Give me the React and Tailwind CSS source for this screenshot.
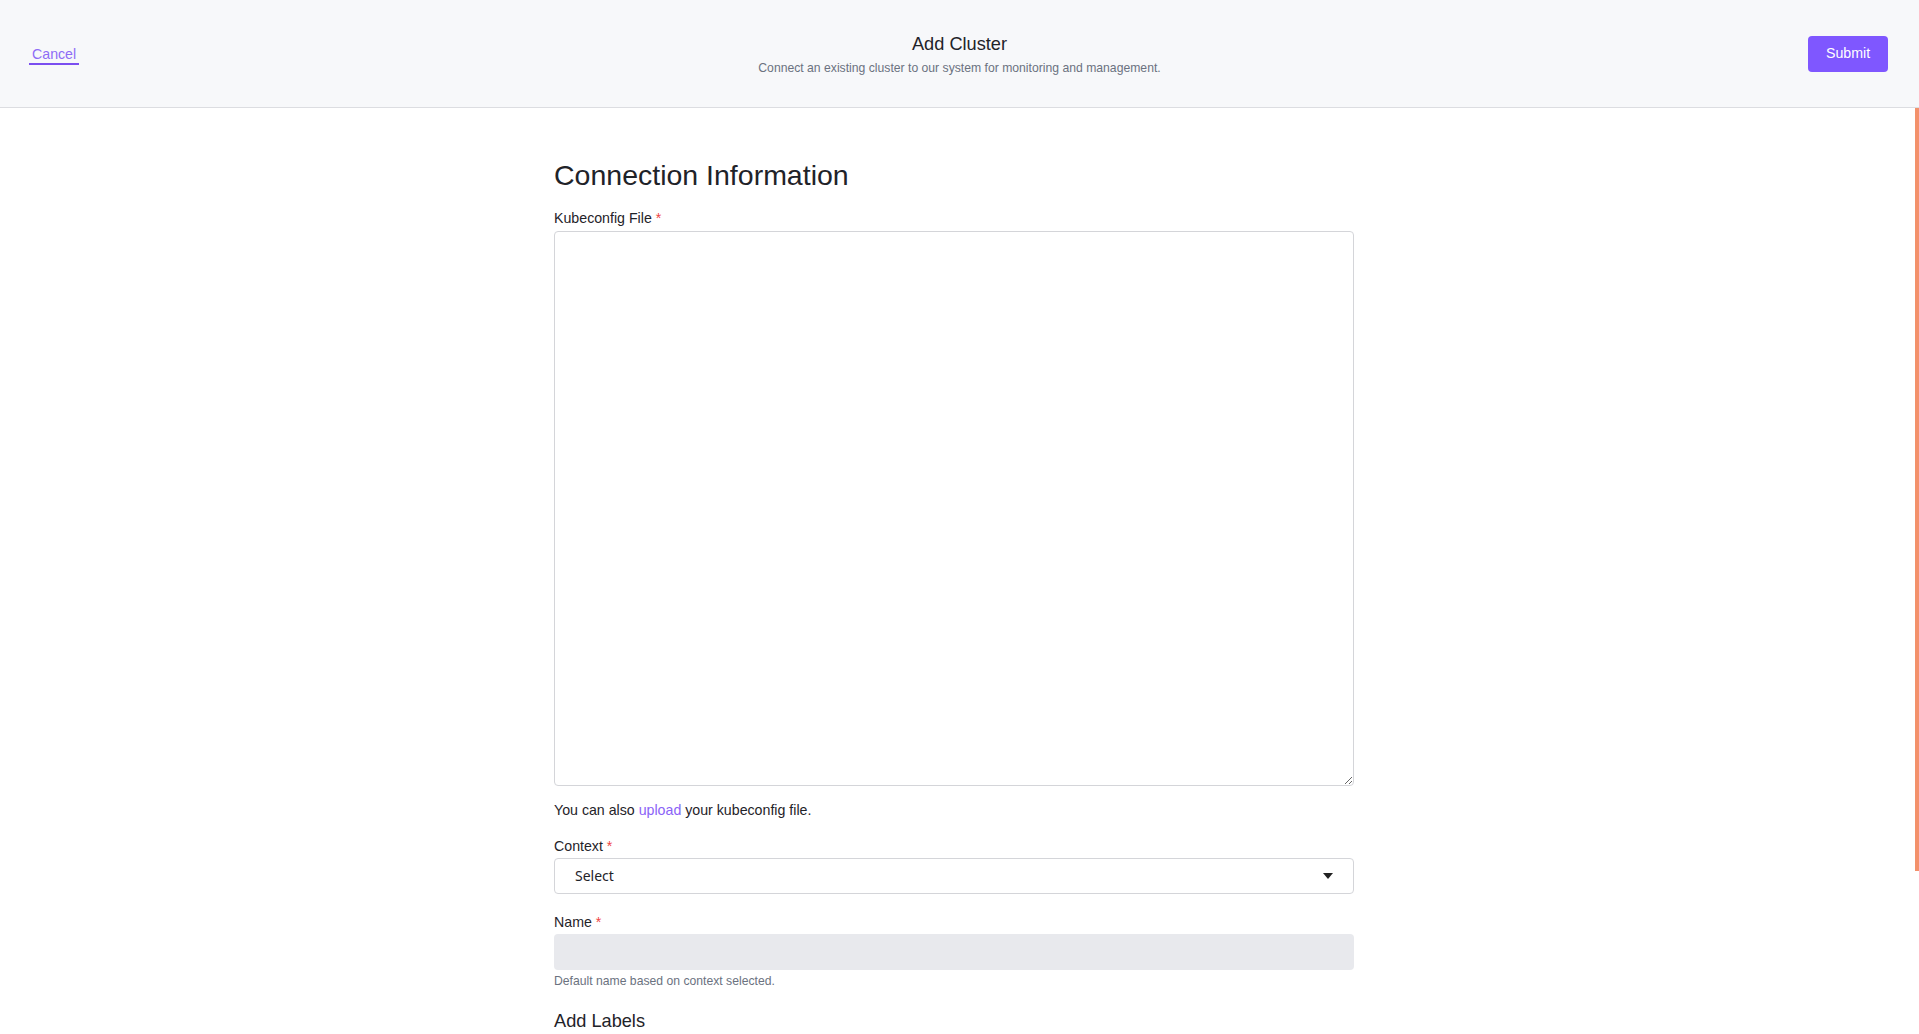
const Label = ({ children }) => (
  <label className="block text-[14.2px] leading-5 text-[#1f2329]">
    {children} <span className="text-[#ef4444]">*</span>
  </label>
);

export default function App() {
  return (
    <div className="min-h-screen bg-white font-['Liberation_Sans',Arial,sans-serif] text-[#1f2329]">
      {/* Header */}
      <header className="grid h-[108px] grid-cols-[1fr_auto_1fr] items-center border-b border-[#dcdde1] bg-[#f7f8fa] pl-[29px] pr-[29px]">
        <div className="pt-[1px]">
          <button className="border-b-2 border-[#7b4ff0] px-[3px] text-[14.2px] leading-[18px] text-[#8e6cf6]">
            Cancel
          </button>
        </div>
        <div className="text-center">
          <h1 className="text-[18.2px] leading-6 text-[#1f2329]">Add Cluster</h1>
          <p className="mt-1 text-[12.2px] leading-4 text-[#6b7280]">
            Connect an existing cluster to our system for monitoring and management.
          </p>
        </div>
        <div className="flex justify-end pr-[2px]">
          <button className="h-9 w-20 rounded bg-[#7f57ff] text-[14.2px] text-white">Submit</button>
        </div>
      </header>

      {/* Form */}
      <main className="flex justify-center pr-[11px] pt-[50px] pb-10">
        <div className="w-[800px]">
          <h2 className="text-[28.5px] leading-[34px] text-[#1f2329]">Connection Information</h2>

          <div className="mt-[16px]">
            <Label>Kubeconfig File</Label>
            <textarea className="mt-[3px] block h-[555px] w-full rounded border border-[#d4d5d9] p-2 text-[14px] outline-none" />
          </div>

          <p className="mt-[14px] text-[14.2px] leading-5">
            You can also <a className="text-[#8b63f7]">upload</a> your kubeconfig file.
          </p>

          <div className="mt-4">
            <Label>Context</Label>
            <div className="mt-[2px] flex h-9 items-center justify-between rounded border border-[#d4d5d9] pl-5 pr-5">
              <span className="pb-[1px] font-['Noto_Sans',sans-serif] text-[14px] text-[#1f2329]">Select</span>
              <svg width="10" height="6" viewBox="0 0 10 6">
                <path d="M0 0h10L5 6z" fill="#222" />
              </svg>
            </div>
          </div>

          <div className="mt-[18px]">
            <Label>Name</Label>
            <div className="mt-[2px] h-9 rounded bg-[#e8e9ed]" />
            <p className="mt-[3px] text-[12.2px] leading-4 text-[#6b7280]">
              Default name based on context selected.
            </p>
          </div>

          <h3 className="mt-5 text-[18.2px] leading-6 text-[#1f2329]">Add Labels</h3>
          <div className="h-40" />
        </div>
      </main>

      {/* scroll thumb */}
      <div className="fixed right-0 top-[108px] h-[763px] w-[4px] bg-[#f3916b]" />
    </div>
  );
}
